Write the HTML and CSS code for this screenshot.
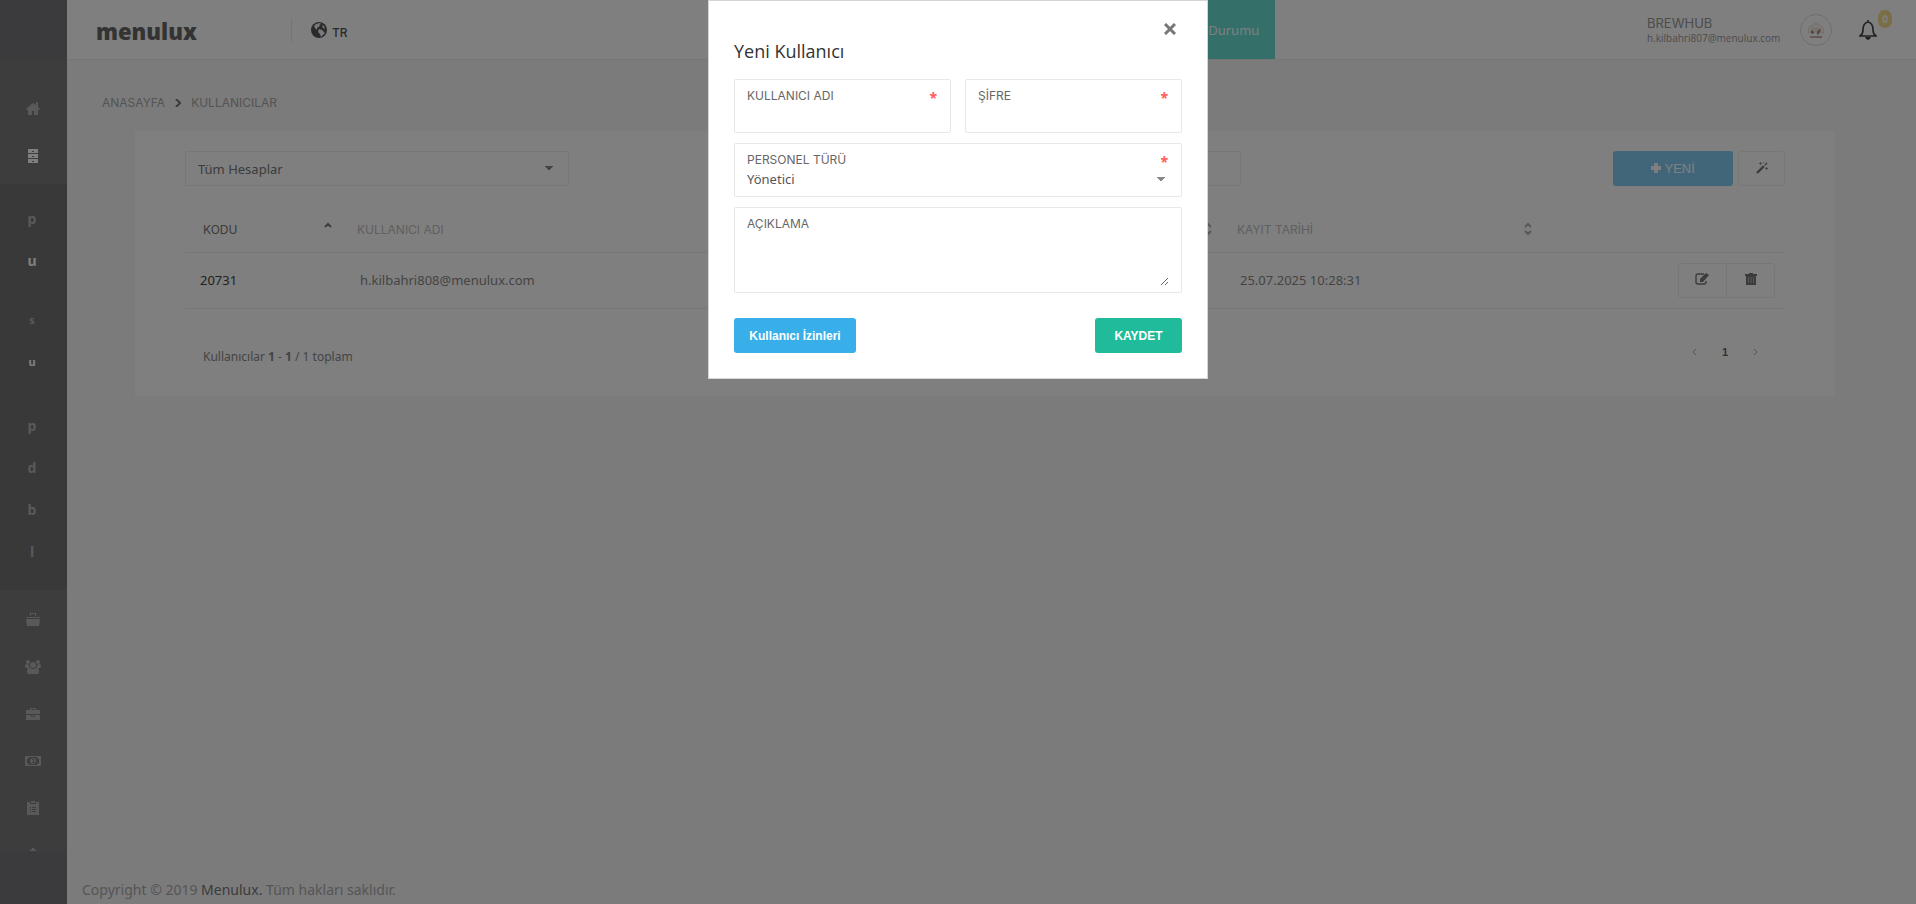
FILE: index.html
```html
<!DOCTYPE html>
<html lang="tr">
<head>
  <meta charset="UTF-8">
  <meta name="viewport" content="width=device-width, initial-scale=1.0">
  <title>Menulux - Kullanıcılar</title>
  <link rel="stylesheet" href="styles.css">
</head>
<body>
  <nav class="sidebar">
    <div class="sidebar-head"></div>
    <div class="sidebar-menu">
      <a href="#" class="menu-item home"><svg width="14" height="13" viewBox="0 0 14 13"><path d="M7 1 0 7l1 1h1v5h4V9h2v4h4V8h1l1-1-2-2V0h-2v3z"/></svg></a>
      <a href="#" class="menu-item active"><svg width="12" height="14" viewBox="0 0 12 14"><path fill-rule="evenodd" d="M1 0h10v4H1zM1 5h10v4H1zM1 10h10v4H1zM5 2v1h2V2zM5 7v1h2V7zM5 12v1h2v-1z"/></svg></a>
      <div class="submenu">
        <a href="#">p</a>
        <a href="#" class="active">u</a>
        <a href="#" class="child first">s</a>
        <a href="#" class="child active">u</a>
        <a href="#" class="after-child">p</a>
        <a href="#">d</a>
        <a href="#">b</a>
        <a href="#">l</a>
      </div>
      <a href="#" class="menu-item basket"><svg width="14" height="13" viewBox="0 0 14 13"><path d="M4 3V0h6v3H9V1H5v2zM0 4h14v1H0zM0 6h14l-1 7H1z"/></svg></a>
      <a href="#" class="menu-item"><svg width="16" height="14" viewBox="0 0 16 14"><circle cx="3" cy="2" r="2"/><circle cx="13" cy="2" r="2"/><circle cx="8" cy="5" r="3"/><path d="M0 5q2-2 4 0v1q0 1 1 2H1Q0 8 0 5zM16 5q-2-2-4 0v1q0 1-1 2h4q1 0 1-3zM2 12q0-5 3-4 3 2 6 0 3-1 3 4 0 2-2 2H4q-2 0-2-2z"/></svg></a>
      <a href="#" class="menu-item"><svg width="14" height="12" viewBox="0 0 14 12"><path fill-rule="evenodd" d="M4 2V0h6v2h4v4H0V2zM5 2h4V1H5zM0 7h5v1q0 1 2 1t2-1V7h5v5H0zM6 7h2v1H6z"/></svg></a>
      <a href="#" class="menu-item"><svg width="16" height="10" viewBox="0 0 16 10"><path fill-rule="evenodd" d="M0 0h16v10H0zM4 1Q4 3 2 3v4q2 0 2 2h8q0-2 2-2V3q-2 0-2-2z"/><path fill-rule="evenodd" d="M8 2c4 0 4 6 0 6S4 2 8 2zM7 3v1h1v2H7v1h3V6H9V3z"/></svg></a>
      <a href="#" class="menu-item"><svg width="12" height="14" viewBox="0 0 12 14"><path fill-rule="evenodd" d="M0 1h3v2h6V1h3v13H0zM3 6v1h1V6zM5 6v1h4V6zM3 8v1h1V8zM5 8v1h4V8zM3 10v1h1v-1zM5 10v1h4v-1z"/><path d="M4 0h4v2H4z"/></svg></a>
      <a href="#" class="menu-item"><svg width="14" height="14" viewBox="0 0 14 14"><path d="M6 0h2v1l3 2v1H8v10H6V4H3V3l3-2z"/></svg></a>
    </div>
  </nav>

  <div class="page">
    <header class="header">
      <div class="header-left">
        <a href="#" class="logo">menulux</a>
        <a href="#" class="lang">
          <svg width="16" height="16" viewBox="0 0 16 16"><circle cx="8" cy="8" r="8" fill="#555"/><path fill="#f5f5f5" d="M5 2l4-1 1 1-2 1 1 1-3 2v2L4 6 3 4zM8 7l3 1 3 3-2 2-2 2-1-3-2-2zM11 3l2 1 1 3-2-1z"/></svg>
          <span>TR</span>
        </a>
      </div>
      <button class="status-button">Durumu</button>
      <div class="header-right">
        <div class="user">
          <span class="user-name">BREWHUB</span>
          <span class="user-mail">h.kilbahri807@menulux.com</span>
        </div>
        <span class="avatar"><svg width="18" height="18" viewBox="0 0 18 18"><path fill="none" stroke="#e6d8d2" d="M2 13Q0 5 6 4h6q6 1 4 9M6 3l3-2 3 2"/><path fill="#efe6e1" d="M4 6h10l1 6H3z"/><path fill="#8c8a88" d="M4 9l3 2-1 2-2-1z"/><path fill="#c98a78" d="M10 10l3-2 1 1-2 4-2 1z"/><path fill="#c9b0a6" d="M3 15h12v2H3z"/></svg></span>
        <a href="#" class="bell">
          <svg width="18" height="20" viewBox="0 0 18 20"><path fill="none" stroke="#444" stroke-width="1.6" d="M1 16q3-2 3-6 0-7 5-8 5 1 5 8 0 4 3 6zM9 0v2"/><path fill="#444" d="M6 17h6q-1 3-3 3t-3-3z"/></svg>
          <span class="badge">0</span>
        </a>
      </div>
    </header>

    <main class="content">
      <div class="breadcrumb">
        <a href="#">ANASAYFA</a>
        <svg width="6" height="8" viewBox="0 0 6 8"><path fill="none" stroke="#777" stroke-width="2" d="M1 0l4 4-4 4"/></svg>
        <span>KULLANICILAR</span>
      </div>

      <section class="card">
        <div class="toolbar">
          <select class="filter" aria-label="Hesap"><option>Tüm Hesaplar</option></select>
          <input class="search" type="text" aria-label="Ara">
          <div class="toolbar-buttons">
            <button class="new-button"><svg width="10" height="10" viewBox="0 0 10 10"><path fill="currentColor" d="M3 0h4v3h3v4H7v3H3V7H0V3h3z"/></svg> YENİ</button>
            <button class="wand-button" aria-label="Araçlar"><svg width="12" height="12" viewBox="0 0 12 12"><path fill="none" stroke="#777" stroke-width="2.4" d="M1 11l7-7"/><path stroke="#777" stroke-width="1.6" d="M9 3l2-2"/><path fill="#999" d="M4 0h1v1h1v1H5v1H4V2H3V1h1zM10 5h1v1h1v1h-1v1h-1V7H9V6h1zM7 0h1v1H7z"/></svg></button>
          </div>
        </div>

        <table class="users">
          <thead>
            <tr>
              <th class="col-code sorted"><div>KODU <svg width="8" height="14" viewBox="0 0 8 14"><path d="M1 5l3-3 3 3"/></svg></div></th>
              <th class="col-name"><div>KULLANICI ADI <svg width="8" height="14" viewBox="0 0 8 14"><path d="M1 5l3-3 3 3M1 9l3 3 3-3"/></svg></div></th>
              <th class="col-date"><div>KAYIT TARİHİ <svg width="8" height="14" viewBox="0 0 8 14"><path d="M1 5l3-3 3 3M1 9l3 3 3-3"/></svg></div></th>
              <th></th>
            </tr>
          </thead>
          <tbody>
            <tr>
              <td class="code">20731</td>
              <td>h.kilbahri808@menulux.com</td>
              <td>25.07.2025 10:28:31</td>
              <td>
                <div class="row-buttons">
                  <button aria-label="Düzenle"><svg width="15" height="12" viewBox="0 0 15 12"><path fill="none" stroke="#777" stroke-width="1.4" d="M9 1H3Q1 1 1 3v6q0 2 2 2h6q2 0 2-2V8"/><path fill="#777" d="M5 9V6l6-6 3 2-6 7z"/></svg></button>
                  <button aria-label="Sil"><svg width="12" height="12" viewBox="0 0 12 12"><path fill="#777" fill-rule="evenodd" d="M0 1h4V0h4v1h4v2h-1v9H1V3H0z"/><path stroke="#a9b4bd" d="M3.500 4v6M6 4v6M8.500 4v6"/></svg></button>
                </div>
              </td>
            </tr>
          </tbody>
        </table>

        <div class="table-footer">
          <span>Kullanıcılar <b>1</b> - <b>1</b> / 1 toplam</span>
          <div class="pager">
            <a href="#" aria-label="Önceki"><svg width="5" height="8" viewBox="0 0 5 8"><path d="M4 1L1 4l3 3"/></svg></a>
            <a href="#" class="current">1</a>
            <a href="#" aria-label="Sonraki"><svg width="5" height="8" viewBox="0 0 5 8"><path d="M1 1l3 3-3 3"/></svg></a>
          </div>
        </div>
      </section>
    </main>

    <footer class="footer">Copyright © 2019 <span>Menulux.</span> Tüm hakları saklıdır.</footer>
  </div>

  <div class="overlay">
    <form class="modal">
      <button type="button" class="close" aria-label="Kapat"><svg width="12" height="12" viewBox="0 0 12 12"><path stroke="#777" stroke-width="3" d="M1 1l10 10M11 1L1 11"/></svg></button>
      <h2>Yeni Kullanıcı</h2>
      <div class="fields">
        <div class="field required">
          <label for="username">KULLANICI ADI</label>
          <input type="text" id="username">
        </div>
        <div class="field required">
          <label for="password">ŞİFRE</label>
          <input type="password" id="password">
        </div>
        <div class="field wide required">
          <label for="staff">PERSONEL TÜRÜ</label>
          <select id="staff"><option>Yönetici</option></select>
        </div>
        <div class="field wide">
          <label for="note">AÇIKLAMA</label>
          <textarea id="note"></textarea>
        </div>
      </div>
      <div class="modal-buttons">
        <button type="button" class="permissions">Kullanıcı İzinleri</button>
        <button type="submit" class="save">KAYDET</button>
      </div>
    </form>
  </div>
</body>
</html>
```

FILE: styles.css
```css
* {
  box-sizing: border-box;
}

body {
  margin: 0;
  min-height: 100vh;
  display: flex;
  background: #f7f7f7;
  color: #888;
  font-family: "Noto Sans", sans-serif;
  font-size: 13px;
}

a {
  color: inherit;
  text-decoration: none;
}

button, input, select, textarea {
  font-family: inherit;
  font-size: 13px;
  margin: 0;
}

svg {
  flex: none;
}

/* sidebar */
.sidebar {
  position: sticky;
  top: 0;
  width: 67px;
  height: 100vh;
  flex: none;
  display: flex;
  flex-direction: column;
  background: #77777b;
  color: #b2b2b6;
  padding-bottom: 53px;
}

.sidebar-head {
  height: 60px;
  flex: none;
}

.sidebar-menu {
  flex: 1;
  min-height: 0;
  overflow: hidden;
  background: #7b7b7b;
  padding-top: 25px;
}

.menu-item {
  height: 47px;
  display: flex;
  align-items: center;
  justify-content: center;
  padding-right: 1px;
  fill: currentColor;
}

.menu-item.active {
  height: 52px;
  padding-bottom: 4px;
}

.menu-item.basket {
  margin-top: 6px;
}

.menu-item.active,
.submenu .active {
  color: #fff;
}

.submenu {
  display: flex;
  flex-direction: column;
  height: 406px;
  padding-top: 14px;
  background: #727272;
  font-size: 14px;
  font-weight: bold;
  line-height: 42px;
  text-align: center;
}

.submenu a {
  height: 42px;
  padding-right: 3px;
}

.submenu .child {
  font-size: 11px;
}

.submenu .first {
  margin-top: 17px;
}

.submenu .after-child {
  margin-top: 22px;
}

/* header */
.page {
  flex: 1;
  min-width: 0;
  display: flex;
  flex-direction: column;
}

.header {
  height: 60px;
  display: flex;
  background: #fff;
  border-bottom: 1px solid #eee;
}

.header-left {
  flex: 1;
  display: flex;
  align-items: center;
  padding-left: 29px;
}

.logo {
  width: 195px;
  padding-top: 3px;
  font-family: "Open Sans", sans-serif;
  font-size: 22px;
  font-weight: 800;
  line-height: 30px;
  color: #666;
}

.lang {
  display: flex;
  align-items: center;
  gap: 5px;
  height: 24px;
  padding-left: 19px;
  border-left: 1px solid #e8e8e8;
  font-family: Inter, sans-serif;
  font-size: 12px;
  font-weight: 500;
  color: #555;
}

.lang span {
  padding-top: 6px;
}

.status-button {
  width: 130px;
  margin-right: 12px;
  padding: 0 16px;
  border: 0;
  background: #69ded2;
  color: #fff;
  text-align: right;
}

.header-right {
  width: 34%;
  display: flex;
  align-items: center;
  justify-content: flex-end;
  padding-right: 24px;
}

.user {
  display: flex;
  flex-direction: column;
  width: 153px;
  color: #999;
}

.user-name {
  font-family: Inter, sans-serif;
  font-size: 13px;
  line-height: 16px;
}

.user-mail {
  font-family: "Open Sans", sans-serif;
  font-size: 10px;
  line-height: 14px;
}

.avatar {
  width: 32px;
  height: 32px;
  display: flex;
  align-items: center;
  justify-content: center;
  border: 1px solid #ddd;
  border-radius: 50%;
}

.bell {
  position: relative;
  display: flex;
  margin-left: 27px;
  padding-right: 15px;
}

.badge {
  position: absolute;
  top: -10px;
  right: 0;
  width: 14px;
  height: 18px;
  border-radius: 7px;
  background: #f5dc8c;
  color: #fff;
  font-size: 10px;
  font-weight: bold;
  line-height: 18px;
  text-align: center;
}

/* content */
.content {
  flex: 1;
  padding: 35px 81px 40px 68px;
}

.breadcrumb {
  display: flex;
  align-items: center;
  gap: 10px;
  margin: 0 0 20px -33px;
  font-family: Inter, sans-serif;
  font-size: 12px;
  line-height: 16px;
  color: #a8a8a8;
}

.card {
  padding: 20px 50px 24px;
  background: #fff;
}

.toolbar {
  display: flex;
}

.filter,
.search {
  width: 24%;
  height: 35px;
  padding: 0 12px;
  border: 1px solid #eee;
  border-radius: 2px;
  background: #fff;
  color: #777;
}

.filter,
.field select {
  appearance: none;
  background-image: linear-gradient(to bottom left, #888 50%, transparent 50%), linear-gradient(to bottom right, #888 50%, transparent 50%);
  background-size: 4px 5px;
  background-repeat: no-repeat;
  background-position: right 19px center, right 15px center;
}

.search {
  margin-left: 18%;
}

.toolbar-buttons {
  display: flex;
  gap: 5px;
  margin-left: auto;
}

.new-button {
  width: 120px;
  border: 0;
  border-radius: 3px;
  background: #83cdf3;
  color: #fff;
  font-family: "Liberation Sans", sans-serif;
}

.wand-button {
  width: 47px;
  height: 35px;
  border: 1px solid #eee;
  border-radius: 3px;
  background: #fff;
}

.users {
  width: 100%;
  margin-top: 19px;
  border-collapse: collapse;
  table-layout: fixed;
}

.users tr {
  border-bottom: 1px solid #eee;
}

.users th {
  height: 47px;
  padding: 2px 7px 0 18px;
  font-family: Inter, sans-serif;
  font-size: 12px;
  font-weight: 400;
  color: #c0c0c0;
}

.users th div {
  display: flex;
  align-items: center;
  justify-content: space-between;
}

.users th svg {
  fill: none;
  stroke: #b0b0b0;
  stroke-width: 2;
}

.users .sorted {
  color: #777;
}

.users .sorted svg {
  stroke: #777;
}

.col-code {
  width: 154px;
}

.col-name {
  width: 55%;
}

.col-date {
  width: 20%;
}

.users td {
  height: 56px;
  padding: 0 10px 0 21px;
}

.users .code {
  padding-left: 15px;
  color: #444;
}

.row-buttons {
  display: flex;
  justify-content: flex-end;
}

.row-buttons button {
  width: 49px;
  height: 35px;
  border: 1px solid #eee;
  border-radius: 3px 0 0 3px;
  background: #fff;
}

.row-buttons button + button {
  margin-left: -1px;
  border-radius: 0 3px 3px 0;
}

.table-footer {
  display: flex;
  justify-content: space-between;
  padding: 33px 27px 0 18px;
  font-size: 12px;
  line-height: 30px;
}

.pager {
  display: flex;
  align-items: center;
  gap: 25px;
  height: 20px;
  color: #666;
}

.pager svg {
  display: block;
  fill: none;
  stroke: #aaa;
}

.pager .current {
  font-family: "Liberation Sans", sans-serif;
  font-size: 11px;
  font-weight: bold;
}

.footer {
  padding: 0 15px 4px;
  font-size: 14px;
  line-height: 20px;
  color: #aaa;
}

.footer span {
  color: #777;
}

/* modal */
.overlay {
  position: fixed;
  inset: 0;
  background: rgba(0, 0, 0, .5);
}

.modal {
  width: 500px;
  max-width: 100%;
  margin: 0 auto;
  padding: 22px 25px 25px;
  border: 1px solid #d5d5d5;
  background: #fff;
}

.close {
  display: block;
  margin: 0 6px 0 auto;
  padding: 0;
  border: 0;
  background: none;
  line-height: 0;
}

.modal h2 {
  margin: 4px 0 15px;
  font-family: "Open Sans", sans-serif;
  font-size: 18px;
  font-weight: 400;
  line-height: 25px;
  color: #333;
}

.fields {
  display: grid;
  grid-template-columns: 1fr 1fr;
  gap: 10px 14px;
}

.field {
  position: relative;
  display: flex;
  flex-direction: column;
  min-height: 54px;
  padding: 8px 12px 6px;
  border: 1px solid #e8e8e8;
  border-radius: 2px;
}

.wide {
  grid-column: 1 / -1;
}

.field label {
  font-family: Inter, sans-serif;
  font-size: 12px;
  line-height: 16px;
  color: #666;
}

.required::after {
  content: "*";
  position: absolute;
  top: 8px;
  right: 13px;
  color: #ff5b5b;
  font-size: 14px;
  font-weight: bold;
  line-height: 20px;
}

.field input,
.field select,
.field textarea {
  width: 100%;
  height: 22px;
  padding: 0;
  border: 0;
  outline: 0;
  background-color: transparent;
  color: #555;
}

.field select {
  background-position: right 8px center, right 4px center;
}

.field textarea {
  height: 54px;
  resize: vertical;
}

.modal-buttons {
  display: flex;
  justify-content: space-between;
  margin-top: 25px;
}

.modal-buttons button {
  height: 35px;
  border: 0;
  border-radius: 3px;
  color: #fff;
  font-family: "Liberation Sans", sans-serif;
  font-size: 12px;
  font-weight: bold;
}

.permissions {
  width: 122px;
  padding: 0;
  background: #38afe9;
}

.save {
  width: 87px;
  background: #1fbb9a;
}
```
